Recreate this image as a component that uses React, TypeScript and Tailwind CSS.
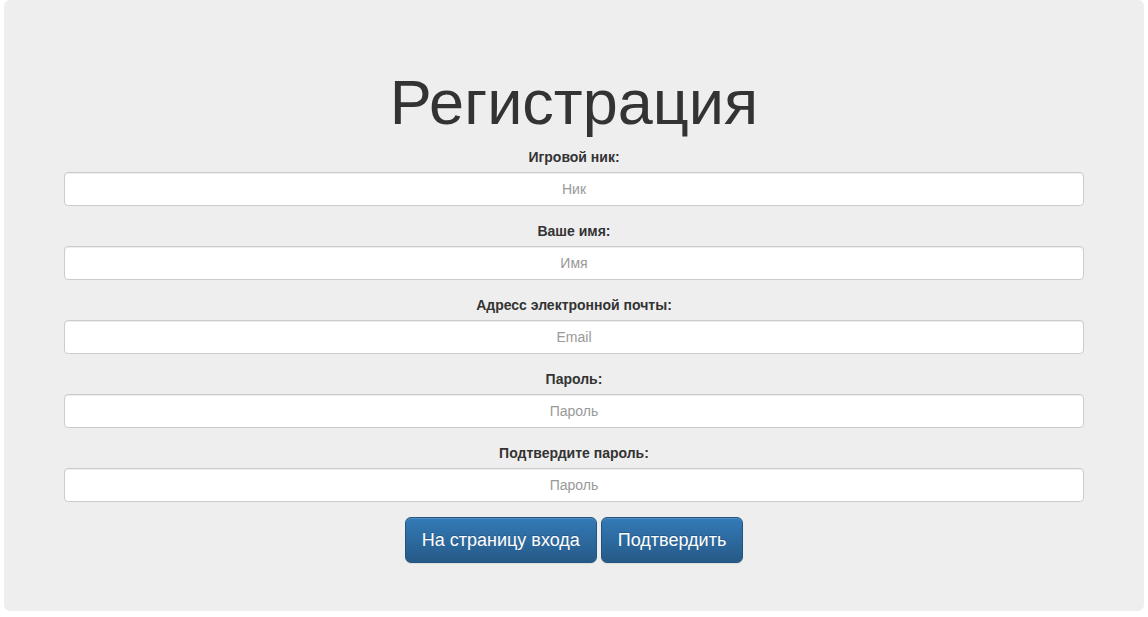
import React from 'react'

const fields = [
  { label: 'Игровой ник:', placeholder: 'Ник', type: 'text' },
  { label: 'Ваше имя:', placeholder: 'Имя', type: 'text' },
  { label: 'Адресс электронной почты:', placeholder: 'Email', type: 'email' },
  { label: 'Пароль:', placeholder: 'Пароль', type: 'password' },
  { label: 'Подтвердите пароль:', placeholder: 'Пароль', type: 'password' },
]

const btn =
  "h-[46px] px-4 rounded-[6px] border border-[#245580] bg-gradient-to-b from-[#337ab7] to-[#265a88] text-white text-[18px] leading-[24px] [text-shadow:0_-1px_0_rgba(0,0,0,0.2)] shadow-[inset_0_1px_0_rgba(255,255,255,0.15),0_1px_1px_rgba(0,0,0,0.075)]"

const App = () => {
  return (
    <div className="min-h-screen bg-white font-['Liberation_Sans',Arial,sans-serif] text-[#333]">
      <div className="ml-1 w-[1140px] bg-[#eeeeee] rounded-[6px] px-[60px] pt-[68px] pb-[48px] text-center">
        <h1 className="text-[63px] leading-[1.1] mb-[10px]">Регистрация</h1>
        <form className="flex flex-col">
          {fields.map((f, i) => (
            <div key={i} className="mb-[15px] flex flex-col">
              <label className="text-[14px] font-bold leading-[20px] mb-[5px]">{f.label}</label>
              <input
                type={f.type}
                placeholder={f.placeholder}
                className="h-[34px] w-full rounded-[4px] border border-[#cccccc] bg-white px-3 text-center text-[14px] text-[#555] placeholder:text-[#999] shadow-[inset_0_1px_1px_rgba(0,0,0,0.075)] outline-none"
              />
            </div>
          ))}
          <div className="flex justify-center gap-1">
            <button type="button" className={btn}>На страницу входа</button>
            <button type="button" className={btn}>Подтвердить</button>
          </div>
        </form>
      </div>
    </div>
  )
}

export default App
